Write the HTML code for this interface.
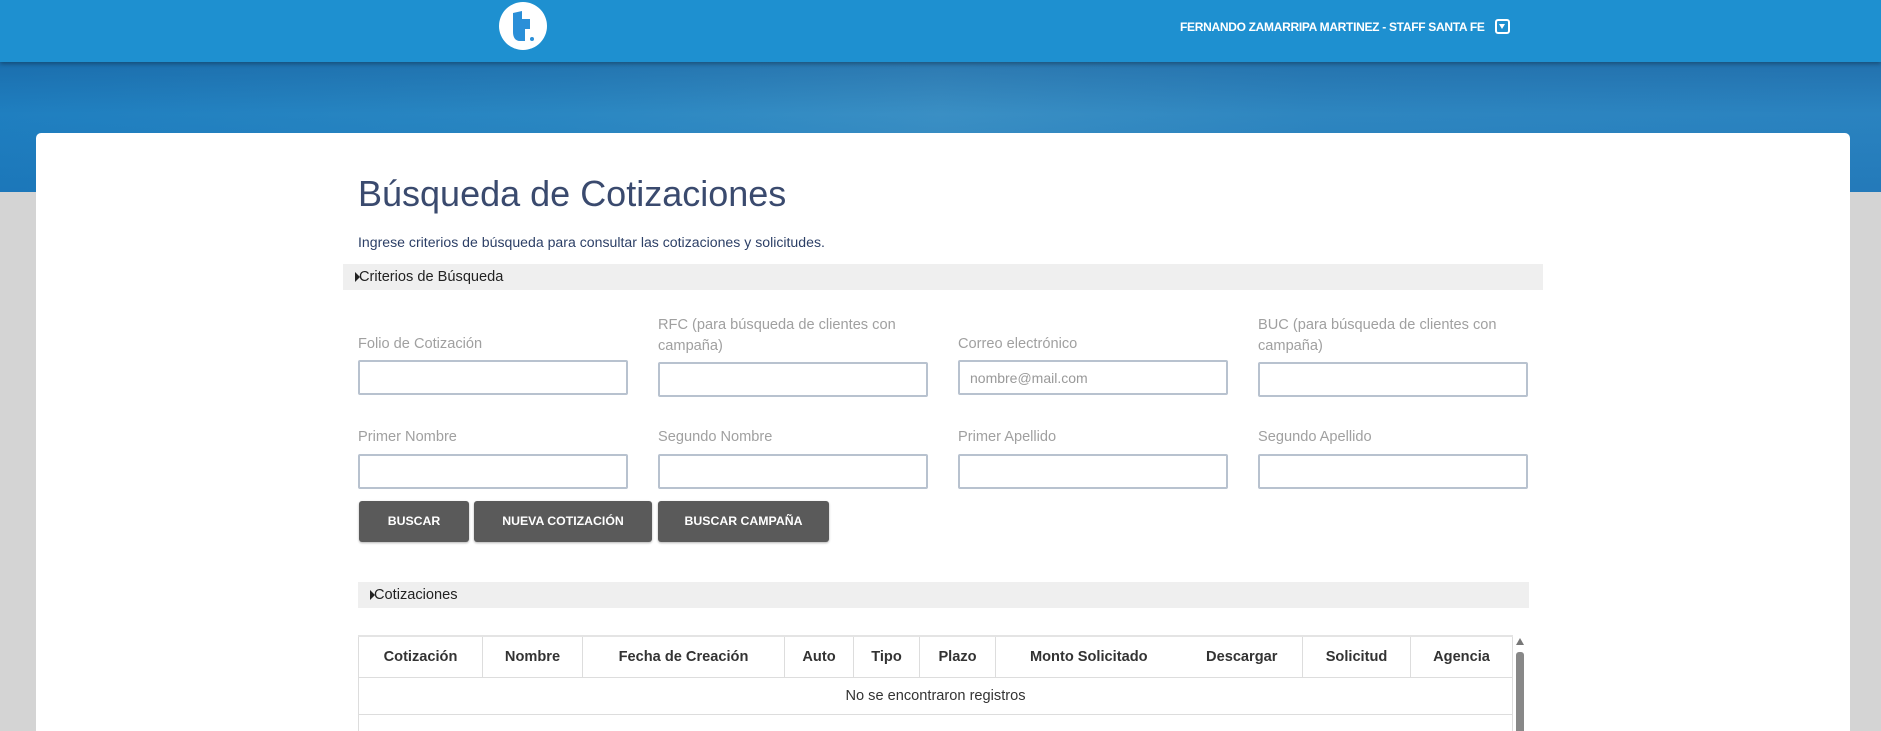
<!DOCTYPE html>
<html style="width:1881px;height:731px;overflow:hidden"><head><meta charset="utf-8"><style>
*{box-sizing:border-box;margin:0;padding:0}
body{width:1881px;height:731px;overflow:hidden;background:#d4d4d4;font-family:"Liberation Sans",Arial,sans-serif;position:relative}
.hero{position:absolute;left:0;top:0;width:1881px;height:192px;background:linear-gradient(90deg,#1f7fc0 0%,#2a87c2 30%,#3a8fc4 50%,#2e86c0 70%,#2a83c0 100%)}
.hero2{position:absolute;left:0;top:62px;width:1881px;height:130px;background:linear-gradient(180deg,rgba(20,80,140,.35),rgba(30,130,200,.0) 40%,rgba(20,100,170,.3))}
.hdr{position:absolute;left:0;top:0;width:1881px;height:62px;background:#1e90d0;box-shadow:0 2px 4px rgba(0,0,0,.3)}
.logo{position:absolute;left:499px;top:2px;width:48px;height:48px;border-radius:50%;background:#fff}
.user{position:absolute;left:1180px;top:20px;color:#fff;font-size:12px;font-weight:bold;letter-spacing:-.3px}
.dd{position:absolute;left:1495px;top:19px;width:15px;height:15px;border:2px solid #fff;border-radius:3px}
.dd:after{content:"";position:absolute;left:2px;top:3px;border-left:3.5px solid transparent;border-right:3.5px solid transparent;border-top:5px solid #fff}
.card{position:absolute;left:36px;top:133px;width:1814px;height:598px;background:#fff;border-radius:5px 5px 0 0}
.abs{position:absolute}
h1{position:absolute;left:358px;top:173px;font-size:36px;font-weight:normal;color:#3a4a6e}
.sub{left:358px;top:234px;font-size:14.1px;color:#2c3f66}
.bar{background:#efefef;font-size:14.6px;color:#222;line-height:26px;padding-left:16px}
.bar:before{content:"";position:absolute;left:12px;top:8px;border-top:5px solid transparent;border-bottom:5px solid transparent;border-left:5px solid #222}
.lbl{font-size:14.6px;color:#a0a0a0;line-height:21px}
.inp{height:35px;width:270px;border:2px solid #b8c2cf;border-radius:2px;background:#fff}
.btn{top:501px;height:41px;background:#5a5a5a;color:#fff;font-size:12.3px;font-weight:bold;text-align:center;line-height:41px;border-radius:3px;box-shadow:0 1px 2px rgba(0,0,0,.3)}
table{position:absolute;left:358px;top:635px;width:1155px;border-collapse:collapse;font-size:14.6px}
th{height:41px;border:1px solid #ddd;border-top:2px solid #e4e4e4;color:#333;font-weight:bold}
td{height:37px;border:1px solid #ddd;text-align:center;color:#333}
</style></head><body>
<div class="hero"></div><div class="hero2"></div>
<div class="hdr"></div>
<div class="logo"><svg width="48" height="48" viewBox="0 0 48 48"><path d="M14 11 L23 9 L23 17 L31 17 L31 27 L26 27 L26 39 L21 39 C16 39 14 35 14 30 Z" fill="#2a8fd8"/><circle cx="33" cy="37" r="2" fill="#2a8fd8"/></svg></div>
<div class="user">FERNANDO ZAMARRIPA MARTINEZ - STAFF SANTA FE</div><div class="dd"></div>
<div class="card"></div>
<h1>Búsqueda de Cotizaciones</h1>
<div class="abs sub">Ingrese criterios de búsqueda para consultar las cotizaciones y solicitudes.</div>
<div class="abs bar" style="left:343px;top:264px;width:1200px;height:26px">Criterios de Búsqueda</div>
<div class="abs lbl" style="left:358px;top:334px">Folio de Cotización</div>
<div class="abs lbl" style="left:658px;top:315px">RFC (para búsqueda de clientes con<br>campaña)</div>
<div class="abs lbl" style="left:958px;top:334px">Correo electrónico</div>
<div class="abs lbl" style="left:1258px;top:315px">BUC (para búsqueda de clientes con<br>campaña)</div>
<div class="abs inp" style="left:358px;top:360px"></div>
<div class="abs inp" style="left:658px;top:362px"></div>
<div class="abs inp" style="left:958px;top:360px;color:#999;font-size:14px;padding:8px 10px">nombre@mail.com</div>
<div class="abs inp" style="left:1258px;top:362px"></div>
<div class="abs lbl" style="left:358px;top:427px">Primer Nombre</div>
<div class="abs lbl" style="left:658px;top:427px">Segundo Nombre</div>
<div class="abs lbl" style="left:958px;top:427px">Primer Apellido</div>
<div class="abs lbl" style="left:1258px;top:427px">Segundo Apellido</div>
<div class="abs inp" style="left:358px;top:454px"></div>
<div class="abs inp" style="left:658px;top:454px"></div>
<div class="abs inp" style="left:958px;top:454px"></div>
<div class="abs inp" style="left:1258px;top:454px"></div>
<div class="abs btn" style="left:359px;width:110px">BUSCAR</div>
<div class="abs btn" style="left:474px;width:178px">NUEVA COTIZACIÓN</div>
<div class="abs btn" style="left:658px;width:171px">BUSCAR CAMPAÑA</div>
<div class="abs bar" style="left:358px;top:582px;width:1171px;height:26px">Cotizaciones</div>
<table><tr><th style="width:124px">Cotización</th><th style="width:100px">Nombre</th><th style="width:202px">Fecha de Creación</th><th style="width:69px">Auto</th><th style="width:66px">Tipo</th><th style="width:76px">Plazo</th><th style="width:186px;border-right:none">Monto Solicitado</th><th style="width:121px;border-left:none">Descargar</th><th style="width:108px">Solicitud</th><th>Agencia</th></tr>
<tr><td colspan="10">No se encontraron registros</td></tr><tr><td colspan="10" style="height:20px;border-bottom:none"></td></tr></table>
<div class="abs" style="left:1516px;top:638px;border-left:4px solid transparent;border-right:4px solid transparent;border-bottom:7px solid #777"></div>
<div class="abs" style="left:1516px;top:652px;width:8px;height:79px;background:#888;border-radius:3px 3px 0 0"></div>
</body></html>
